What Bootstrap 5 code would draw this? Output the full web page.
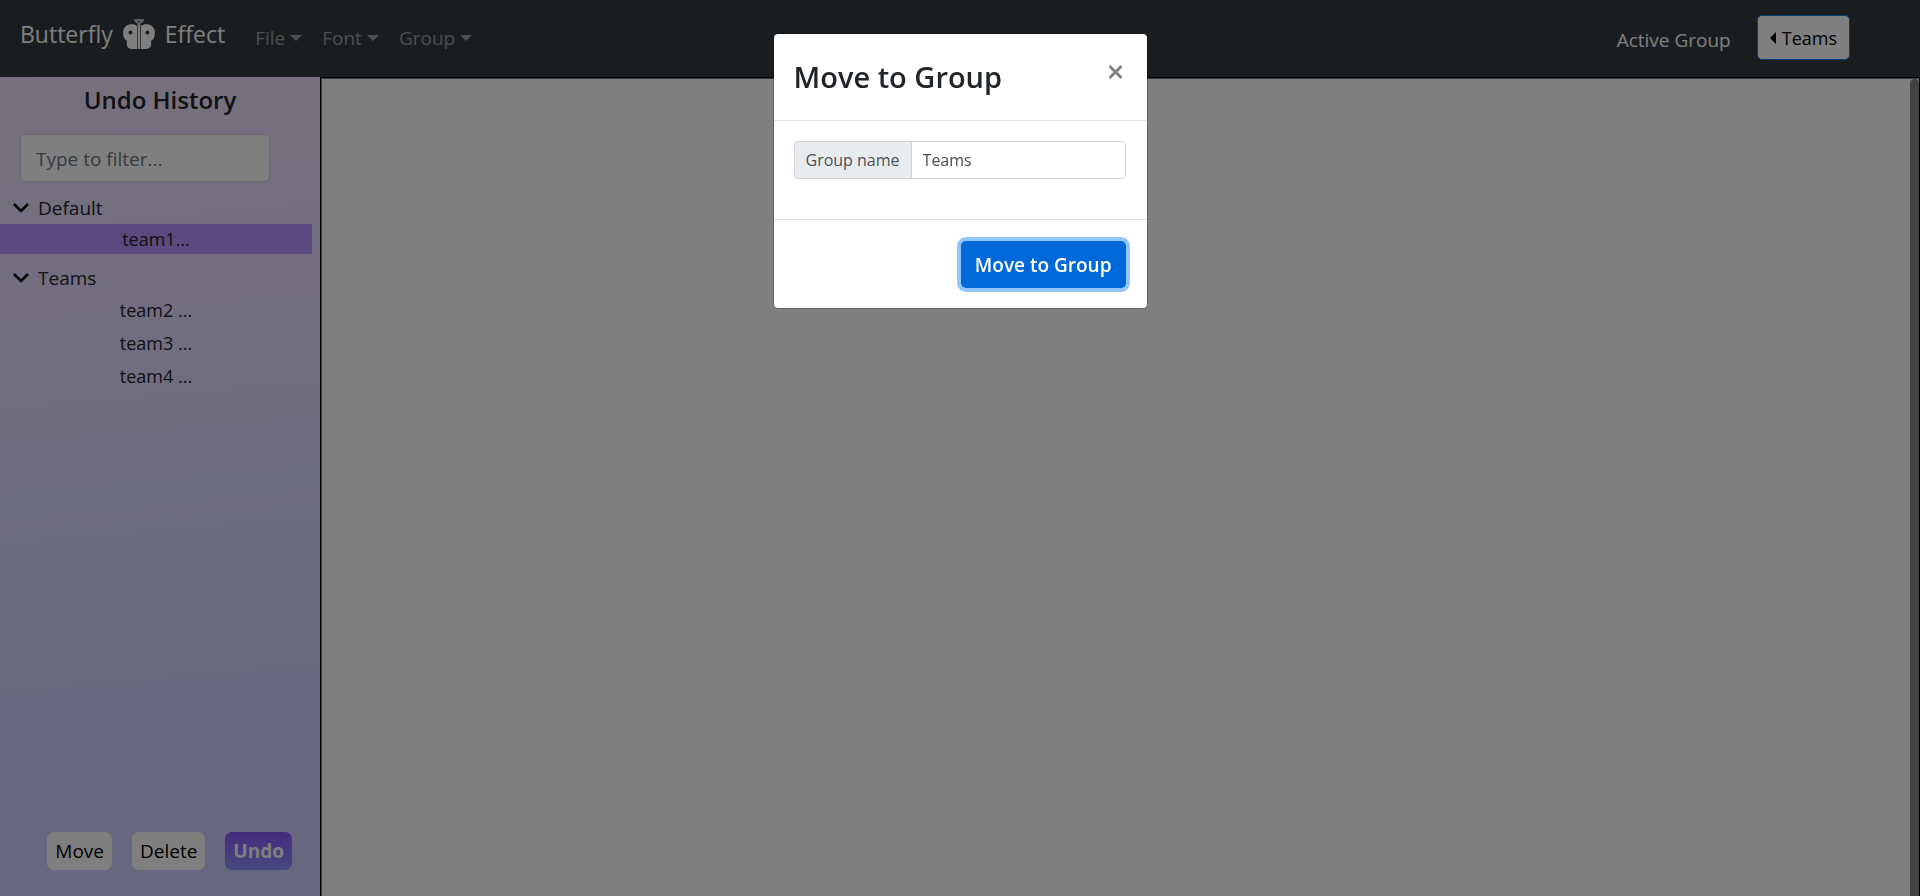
<!DOCTYPE html>
<html lang="en">
<head>
<meta charset="utf-8">
<meta name="viewport" content="width=device-width, initial-scale=1">
<title>Butterfly Effect</title>
<link href="https://cdn.jsdelivr.net/npm/bootstrap@5.3.0/dist/css/bootstrap.min.css" rel="stylesheet">
<style>
  body { font-family: "Open Sans", "Noto Sans", sans-serif; font-size: 19px; line-height: 30px; color: #212529; }
  .topbar { background: #343a40; height: 77px; padding: 0 70px 2px 20px; }
  .brand { font-size: 23px; color: #fff; gap: 9px; padding-bottom: 8px; margin-right: 30px; }
  .menus { gap: 20px; }
  .menus .dropdown-toggle { color: rgba(255,255,255,.5); }
  .menus .dropdown-toggle::after { border-top-width: 6px; border-left-width: 6px; border-right-width: 6px; margin-left: 5px; vertical-align: 4px; }
  .active-group { gap: 26px; }
  .active-label { color: #fff; padding-top: 4px; }
  .group-btn { background: #fff; border: 1px solid #007bff; border-radius: 5px; height: 45px; padding: 0 12px; font-size: 18px; color: #000; gap: 6px; }
  .sidebar { width: 320px; background: linear-gradient(175deg, #eee0fd 0%, #e2dcff 35%, #cccdff 100%); }
  .side-title { font-size: 24px; font-weight: 600; line-height: 32px; padding-top: 7px; }
  .filter-box { height: 48px; width: 250px; margin: 18px 0 10px 20px; font-size: 19px; padding: 6px 15px 4px; border-radius: 5px; border-color: #ced4da; }
  .filter-box::placeholder { color: #6c757d; }
  .tree { width: 312px; }
  .tree-head { height: 32px; padding-left: 13px; gap: 9px; }
  .tree-item { height: 30px; font-size: 18px; color: #212529; }
  .tree-item.current { background: #b794ff; margin-bottom: 8px; }
  .tree-list { gap: 3px; padding-top: 1px; }
  .tools { gap: 20px; padding: 0 28px 26px 0; }
  .tool { height: 38px; border-radius: 7px; padding: 0 8px; font-size: 19px; color: #000; background: #fff; }
  .tool.undo { background: linear-gradient(#8858ff, #9090ff); color: #fff; font-weight: 700; }
  .workspace { border: 1px solid #000; border-bottom: 0; background: #fff; box-shadow: inset 1px 1px 0 #777; }
  .scroll-thumb { width: 9px; background: #858585; border-radius: 5px 5px 0 0; margin-top: 1px; }
  .modal-dialog { max-width: 375px; margin: 33px auto; }
  .modal-content { border-radius: 5px; border-color: rgba(0,0,0,.2); background-clip: padding-box; }
  .modal-header { padding: 20px; border-color: #dee2e6; height: 87px; }
  .modal-title { font-size: 29px; font-weight: 600; line-height: 46px; }
  .x-btn { color: #808080; padding: 0 4px; height: 36px; }
  .modal-body { padding: 20px 21px 20px 20px; }
  .modal-body .input-group { margin-bottom: 20px; }
  .modal-body .input-group-text, .modal-body .form-control { font-size: 16px; height: 38px; padding: 0 11px; color: #495057; border-color: #ced4da; border-radius: 4px; line-height: 24px; }
  .modal-body .input-group-text { background: #e9ecef; }
  .modal-footer { padding: 21px 21px 20px 20px; border-color: #dee2e6; }
  .modal-footer > * { margin: 0; }
  .go-btn { background: #0069d9; color: #fff; height: 47px; padding: 0 14px; border-radius: 5px; font-size: 19px; font-weight: 600; box-shadow: 0 0 0 4px #92c6ff; }
</style>
</head>
<body class="vh-100 d-flex flex-column overflow-hidden">
<nav class="topbar d-flex align-items-center justify-content-between flex-shrink-0">
  <div class="d-flex align-items-center">
    <a href="#" class="brand d-flex align-items-center text-decoration-none">
      <span>Butterfly</span>
      <svg width="34" height="32" viewBox="0 0 34 32" aria-hidden="true">
        <path fill="#fff" fill-rule="evenodd" d="M15 8C12 5 1 5 1 15c0 4 2 7 4 8-1 5 1 8 5 8h5zM8.500 12.500a2 2 0 1 1 0 4 2 2 0 0 1 0-4z"/>
        <path fill="#fff" fill-rule="evenodd" d="M19 8c3-3 14-3 14 7 0 4-2 7-4 8 1 5-1 8-5 8h-5zM25.500 12.500a2 2 0 1 0 0 4 2 2 0 0 0 0-4z"/>
        <path d="M17 5v26" stroke="#fff" stroke-width="2.500"/>
        <path d="M13 2l4 4 4-4M15 2h4" fill="none" stroke="#c8c8c8" stroke-width="2" stroke-linecap="round"/>
      </svg>
      <span>Effect</span>
    </a>
    <div class="menus d-flex">
      <a href="#" class="dropdown-toggle text-decoration-none">File</a>
      <a href="#" class="dropdown-toggle text-decoration-none">Font</a>
      <a href="#" class="dropdown-toggle text-decoration-none">Group</a>
    </div>
  </div>
  <div class="active-group d-flex align-items-center">
    <span class="active-label">Active Group</span>
    <button type="button" class="group-btn d-flex align-items-center">
      <svg width="6" height="12" viewBox="0 0 6 12" aria-hidden="true"><path d="M6 0v12L0 6z"/></svg>Teams
    </button>
  </div>
</nav>
<main class="d-flex flex-grow-1">
  <aside class="sidebar d-flex flex-column flex-shrink-0">
    <h2 class="side-title text-center mb-0">Undo History</h2>
    <input type="text" class="filter-box form-control" placeholder="Type to filter..." aria-label="Filter history">
    <div class="tree">
      <div class="tree-head d-flex align-items-center">
        <svg width="16" height="10" viewBox="0 0 16 10" aria-hidden="true"><path d="M1 1l7 7 7-7" fill="none" stroke="#000" stroke-width="2.500"/></svg>
        <span>Default</span>
      </div>
      <button type="button" class="tree-item current w-100 border-0 p-0 d-block">team1...</button>
      <div class="tree-head d-flex align-items-center">
        <svg width="16" height="10" viewBox="0 0 16 10" aria-hidden="true"><path d="M1 1l7 7 7-7" fill="none" stroke="#000" stroke-width="2.500"/></svg>
        <span>Teams</span>
      </div>
      <div class="tree-list d-flex flex-column">
        <button type="button" class="tree-item bg-transparent border-0 p-0">team2 ...</button>
        <button type="button" class="tree-item bg-transparent border-0 p-0">team3 ...</button>
        <button type="button" class="tree-item bg-transparent border-0 p-0">team4 ...</button>
      </div>
    </div>
    <div class="tools d-flex justify-content-end mt-auto">
      <button type="button" class="tool border-0">Move</button>
      <button type="button" class="tool border-0">Delete</button>
      <button type="button" class="tool undo border-0">Undo</button>
    </div>
  </aside>
  <section class="workspace flex-grow-1 d-flex justify-content-end" aria-label="Workspace">
    <div class="scroll-thumb"></div>
  </section>
</main>

<div class="modal-backdrop show"></div>
<div class="modal show d-block" tabindex="-1" role="dialog" aria-labelledby="moveTitle">
  <div class="modal-dialog">
    <div class="modal-content">
      <div class="modal-header align-items-start">
        <h1 class="modal-title" id="moveTitle">Move to Group</h1>
        <button type="button" class="x-btn border-0 bg-transparent d-flex align-items-center" aria-label="Close">
          <svg width="15" height="14" viewBox="0 0 15 14" aria-hidden="true"><path d="M1.500 1l12 12M13.500 1l-12 12" stroke="#808080" stroke-width="2.800"/></svg>
        </button>
      </div>
      <div class="modal-body">
        <div class="input-group flex-nowrap">
          <label class="input-group-text" for="groupName">Group name</label>
          <input type="text" class="form-control" id="groupName" value="Teams">
        </div>
      </div>
      <div class="modal-footer">
        <button type="button" class="go-btn border-0">Move to Group</button>
      </div>
    </div>
  </div>
</div>
<script src="https://cdn.jsdelivr.net/npm/bootstrap@5.3.0/dist/js/bootstrap.bundle.min.js"></script>
</body>
</html>
